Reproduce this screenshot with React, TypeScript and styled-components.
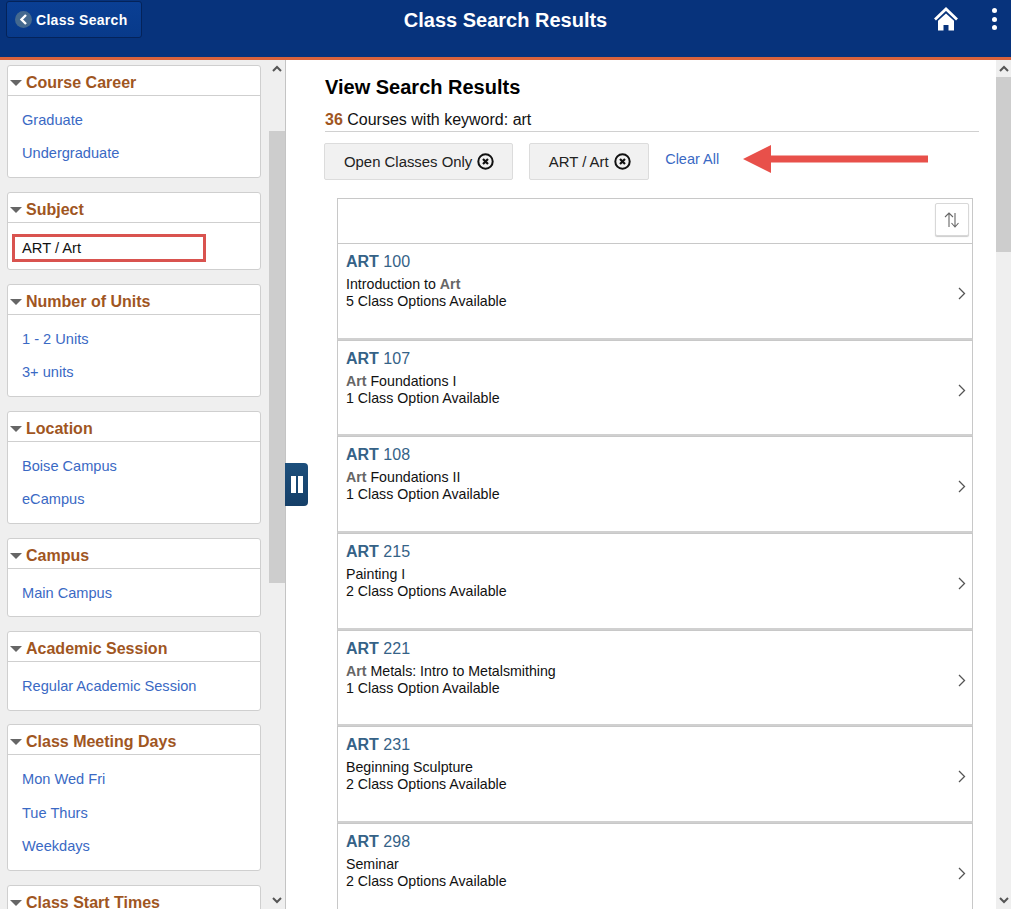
import { FC } from 'react'
import styled, { createGlobalStyle } from 'styled-components'

const GlobalStyle = createGlobalStyle`
  html, body {
    margin: 0;
    padding: 0;
    height: 909px;
    overflow: hidden;
    background: #fff;
    font-family: "Liberation Sans", Arial, sans-serif;
  }
`

const Page = styled.div`
  width: 1011px;
  height: 909px;
  display: flex;
  flex-direction: column;
  overflow: hidden;
`

const Header = styled.header`
  box-sizing: border-box;
  height: 60px;
  flex: none;
  background: #07337c;
  border-bottom: 3px solid #d9633c;
  display: flex;
  align-items: flex-start;
  justify-content: space-between;
  position: relative;
`

const BackButton = styled.button`
  box-sizing: border-box;
  width: 136px;
  height: 37px;
  margin: 1px 0 0 6px;
  padding: 0 0 0 8px;
  display: flex;
  align-items: center;
  gap: 4px;
  background: linear-gradient(#0a3f94, #083a8a);
  border: 1px solid #04235a;
  border-radius: 3px;
  color: #fff;
  font: bold 14px "Liberation Sans", Arial, sans-serif;
  letter-spacing: 0.3px;
`

const BackCircle = styled.span`
  width: 17px;
  height: 17px;
  border-radius: 50%;
  background: #44698f;
  display: flex;
  align-items: center;
  justify-content: center;
`

const HeaderTitle = styled.h1`
  position: absolute;
  left: 0;
  right: 0;
  top: 8px;
  margin: 0;
  text-align: center;
  color: #fff;
  font-size: 20px;
  line-height: 24px;
  font-weight: bold;
`

const HeaderActions = styled.div`
  display: flex;
  align-items: flex-start;
  gap: 34px;
  margin: 6px 14px 0 0;
`

const Dots = styled.div`
  display: flex;
  flex-direction: column;
  gap: 3.5px;
  padding-top: 2px;
`

const Dot = styled.span`
  width: 5px;
  height: 5px;
  border-radius: 50%;
  background: #fff;
`

const Body = styled.div`
  flex: 1;
  min-height: 0;
  display: flex;
`

const Sidebar = styled.aside`
  box-sizing: border-box;
  width: 286px;
  flex: none;
  display: flex;
  background: #efefef;
  border-right: 1px solid #c4c4c4;
  overflow: hidden;
`

const Facets = styled.div`
  width: 269px;
  flex: none;
  box-sizing: border-box;
  padding: 5px 8px 0 7px;
  display: flex;
  flex-direction: column;
  gap: 13.5px;
`

const Facet = styled.section`
  box-sizing: border-box;
  flex: none;
  background: #fff;
  border: 1px solid #cfcfcf;
  border-radius: 3px;
`

const FacetHeader = styled.div`
  box-sizing: border-box;
  height: 30px;
  display: flex;
  align-items: center;
  gap: 4px;
  padding: 5px 0 0 2px;
  border-bottom: 1px solid #cfcfcf;
`

const Caret = styled.span`
  width: 0;
  height: 0;
  border-left: 6px solid transparent;
  border-right: 6px solid transparent;
  border-top: 6px solid #666;
`

const FacetTitle = styled.span`
  color: #a0561f;
  font-size: 16px;
  font-weight: bold;
`

const FacetList = styled.div`
  padding: 8px 14px 6.5px;
  display: flex;
  flex-direction: column;
`

const FacetLink = styled.a`
  color: #3a69c4;
  font-size: 14.6px;
  line-height: 33.4px;
`

const SelectedWrap = styled.div`
  padding: 11px 54px 7.6px 4px;
`

const Selected = styled.div`
  box-sizing: border-box;
  height: 28px;
  border: 3px solid #d9534f;
  padding-left: 7px;
  color: #111;
  font-size: 14.7px;
  line-height: 23px;
`

const Track = styled.div<{ $width: number }>`
  box-sizing: border-box;
  width: ${(p) => p.$width}px;
  flex: none;
  height: 100%;
  background: #efefef;
  display: flex;
  flex-direction: column;
`

const Arrow = styled.div`
  height: 17px;
  flex: none;
  display: flex;
  align-items: center;
  justify-content: center;
`

const Thumb = styled.div<{ $top: number; $height: number }>`
  flex: none;
  margin-top: ${(p) => p.$top}px;
  height: ${(p) => p.$height}px;
  background: #cdcdcd;
`

const Spacer = styled.div`
  flex: 1;
`

const Main = styled.main`
  flex: 1;
  min-width: 0;
  display: flex;
  position: relative;
`

const PauseTab = styled.div`
  position: absolute;
  left: -1px;
  top: 403px;
  box-sizing: border-box;
  width: 23px;
  height: 43px;
  background: linear-gradient(#1c4f7c, #153f68);
  border-radius: 0 4px 4px 0;
  display: flex;
  align-items: center;
  justify-content: center;
  gap: 2px;
`

const PauseBar = styled.span`
  width: 5px;
  height: 17px;
  background: #fff;
`

const Content = styled.div`
  flex: 1;
  min-width: 0;
  box-sizing: border-box;
  padding: 16px 17px 0 39px;
`

const Title = styled.h2`
  margin: 0;
  color: #000;
  font-size: 20px;
  line-height: 23px;
  font-weight: bold;
`

const Keyword = styled.div`
  margin-top: 11px;
  height: 22px;
  box-sizing: border-box;
  border-bottom: 1px solid #d0d0d0;
  color: #111;
  font-size: 16px;
  line-height: 20px;
`

const Count = styled.b`
  color: #a0561f;
`

const Filters = styled.div`
  margin: 11px 0 0 -1px;
  display: flex;
  align-items: flex-start;
`

const Chip = styled.div`
  box-sizing: border-box;
  height: 37px;
  margin-right: 16px;
  padding: 0 17.5px 0 19px;
  display: flex;
  align-items: center;
  gap: 5px;
  background: #f1f1f1;
  border: 1px solid #dcdcdc;
  border-radius: 2px;
  color: #222;
  font-size: 14.9px;
`

const ClearAll = styled.a`
  margin-top: 6px;
  color: #3a69c4;
  font-size: 14.5px;
  line-height: 20px;
`

const RedArrow = styled.svg`
  display: block;
  margin: 2px 0 0 24px;
`

const Results = styled.div`
  margin: 18px 6px 0 12px;
`

const SortBar = styled.div`
  box-sizing: border-box;
  height: 45px;
  border: 1px solid #c8c8c8;
  border-bottom: none;
  display: flex;
  justify-content: flex-end;
  padding: 4px 3px 0 0;
`

const SortButton = styled.div`
  box-sizing: border-box;
  width: 34px;
  height: 33px;
  background: #fff;
  border: 1px solid #d8d8d8;
  border-radius: 2px;
  box-shadow: 0 1px 1px #ccc;
  display: flex;
  align-items: center;
  justify-content: center;
`

const Row = styled.div`
  box-sizing: border-box;
  height: 96.67px;
  background: #fff;
  border: 1px solid #c8c8c8;
  border-bottom-width: 2px;
  border-bottom-color: #d0d0d0;
  padding: 8px 8px 0;
  display: flex;
  justify-content: space-between;
`

const Course = styled.div`
  color: #356287;
  font-size: 16px;
  line-height: 20px;
`

const CourseText = styled.div`
  margin-top: 4px;
  color: #111;
  font-size: 14.2px;
  line-height: 17px;
`

const Match = styled.b`
  color: #666;
`

const Chevron = styled.svg`
  display: block;
  margin: 35px -2px 0 0;
`

const facets = [
  { title: 'Course Career', links: ['Graduate', 'Undergraduate'] },
  { title: 'Subject', selected: 'ART / Art' },
  { title: 'Number of Units', links: ['1 - 2 Units', '3+ units'] },
  { title: 'Location', links: ['Boise Campus', 'eCampus'] },
  { title: 'Campus', links: ['Main Campus'] },
  { title: 'Academic Session', links: ['Regular Academic Session'] },
  { title: 'Class Meeting Days', links: ['Mon Wed Fri', 'Tue Thurs', 'Weekdays'] },
  { title: 'Class Start Times', links: [] },
]

const courses = [
  { num: '100', before: 'Introduction to ', match: 'Art', after: '', options: '5 Class Options Available' },
  { num: '107', before: '', match: 'Art', after: ' Foundations I', options: '1 Class Option Available' },
  { num: '108', before: '', match: 'Art', after: ' Foundations II', options: '1 Class Option Available' },
  { num: '215', before: 'Painting I', match: '', after: '', options: '2 Class Options Available' },
  { num: '221', before: '', match: 'Art', after: ' Metals: Intro to Metalsmithing', options: '1 Class Option Available' },
  { num: '231', before: 'Beginning Sculpture', match: '', after: '', options: '2 Class Options Available' },
  { num: '298', before: 'Seminar', match: '', after: '', options: '2 Class Options Available' },
]

const ArrowIcon: FC<{ down?: boolean }> = ({ down }) => (
  <svg width="10" height="7" viewBox="0 0 10 7">
    <path d={down ? 'M1 1l4 4 4-4' : 'M1 6l4-4 4 4'} fill="none" stroke="#555" strokeWidth="2" />
  </svg>
)

const RemoveIcon = () => (
  <svg width="17" height="17" viewBox="0 0 17 17">
    <circle cx="8.5" cy="8.5" r="7.2" fill="none" stroke="#111" strokeWidth="2" />
    <path d="M6 6l5 5M11 6l-5 5" stroke="#111" strokeWidth="2.2" />
  </svg>
)

export default function App() {
  return (
    <Page>
      <GlobalStyle />
      <Header>
        <BackButton>
          <BackCircle>
            <svg width="9" height="11" viewBox="0 0 9 11">
              <path d="M7 1L2.5 5.5 7 10" fill="none" stroke="#fff" strokeWidth="2.4" />
            </svg>
          </BackCircle>
          Class Search
        </BackButton>
        <HeaderTitle>Class Search Results</HeaderTitle>
        <HeaderActions>
          <svg width="24" height="25" viewBox="0 0 24 25">
            <path d="M1 13.5L12 3l11 10.5" fill="none" stroke="#fff" strokeWidth="2.8" />
            <path d="M12 7.5l8 7.2V24.500h-5.500V19h-5v5.500H4v-9.800z" fill="#fff" />
          </svg>
          <Dots>
            <Dot />
            <Dot />
            <Dot />
          </Dots>
        </HeaderActions>
      </Header>
      <Body>
        <Sidebar>
          <Facets>
            {facets.map((f) => (
              <Facet key={f.title}>
                <FacetHeader>
                  <Caret />
                  <FacetTitle>{f.title}</FacetTitle>
                </FacetHeader>
                {f.selected ? (
                  <SelectedWrap>
                    <Selected>{f.selected}</Selected>
                  </SelectedWrap>
                ) : (
                  <FacetList>
                    {f.links?.map((l) => <FacetLink key={l}>{l}</FacetLink>)}
                  </FacetList>
                )}
              </Facet>
            ))}
          </Facets>
          <Track $width={16}>
            <Arrow>
              <ArrowIcon />
            </Arrow>
            <Thumb $top={54} $height={452} />
            <Spacer />
            <Arrow>
              <ArrowIcon down />
            </Arrow>
          </Track>
        </Sidebar>
        <Main>
          <PauseTab>
            <PauseBar />
            <PauseBar />
          </PauseTab>
          <Content>
            <Title>View Search Results</Title>
            <Keyword>
              <Count>36</Count> Courses with keyword: art
            </Keyword>
            <Filters>
              <Chip>
                Open Classes Only <RemoveIcon />
              </Chip>
              <Chip>
                ART / Art <RemoveIcon />
              </Chip>
              <ClearAll>Clear All</ClearAll>
              <RedArrow width="185" height="28" viewBox="0 0 185 28">
                <path d="M0 14L28 0v10.500h157v7H28V28z" fill="#e8504a" />
              </RedArrow>
            </Filters>
            <Results>
              <SortBar>
                <SortButton>
                  <svg width="17" height="16" viewBox="0 0 17 16">
                    <path
                      d="M5 15V1M1 5l4-4 4 4M11 1v14M7.500 11l3.500 4 3.500-4"
                      fill="none"
                      stroke="#666"
                      strokeWidth="1.1"
                    />
                  </svg>
                </SortButton>
              </SortBar>
              {courses.map((c) => (
                <Row key={c.num}>
                  <div>
                    <Course>
                      <b>ART</b> {c.num}
                    </Course>
                    <CourseText>
                      {c.before}
                      {c.match && <Match>{c.match}</Match>}
                      {c.after}
                      <br />
                      {c.options}
                    </CourseText>
                  </div>
                  <Chevron width="8" height="13" viewBox="0 0 8 13">
                    <path d="M1 1l5.500 5.500L1 12" fill="none" stroke="#555" strokeWidth="1.3" />
                  </Chevron>
                </Row>
              ))}
            </Results>
          </Content>
          <Track $width={15}>
            <Arrow>
              <ArrowIcon />
            </Arrow>
            <Thumb $top={0} $height={175} />
            <Spacer />
            <Arrow>
              <ArrowIcon down />
            </Arrow>
          </Track>
        </Main>
      </Body>
    </Page>
  )
}
